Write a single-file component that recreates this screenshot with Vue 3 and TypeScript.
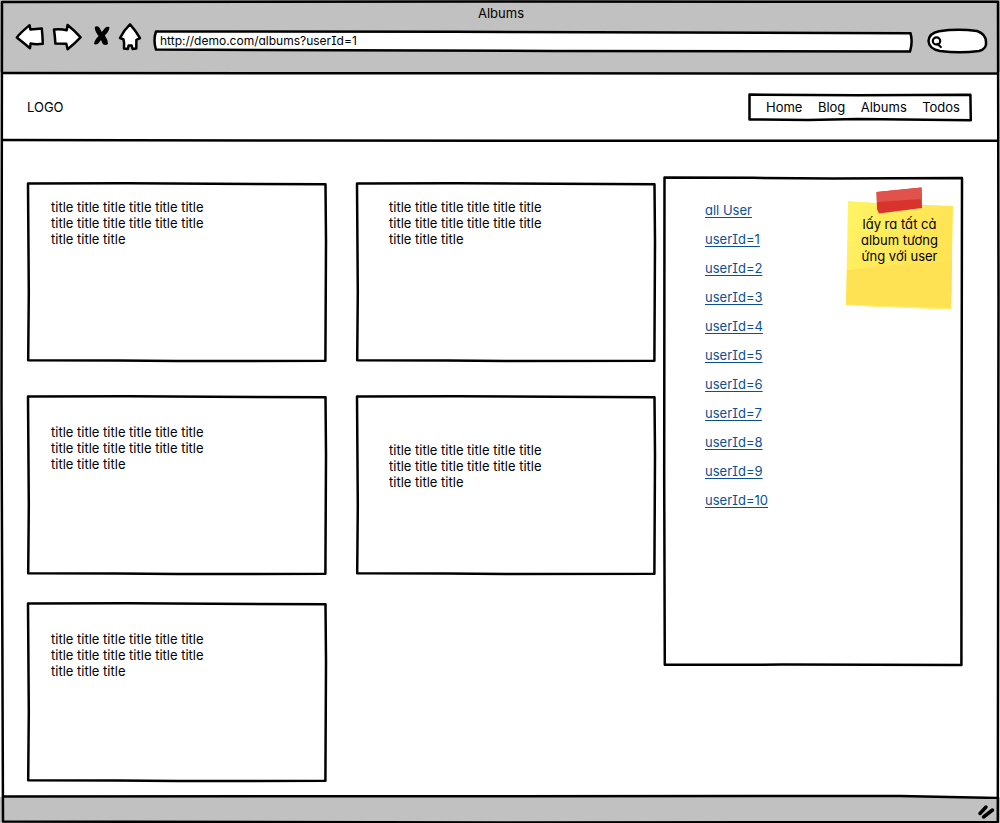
<script setup lang="ts">
import { ref } from 'vue'

interface Album {
  id: number
  title: string
  place: string
}

const words = (count: number): string => Array(count).fill('title').join(' ')

const address = ref('http://demo.com/albums?userId=1')
const query = ref('')
const menu: string[] = ['Home', 'Blog', 'Albums', 'Todos']
const albums: Album[] = [
  { id: 1, title: words(15), place: 'top' },
  { id: 2, title: words(15), place: 'top inset' },
  { id: 3, title: words(15), place: 'middle' },
  { id: 4, title: words(15), place: 'low inset' },
  { id: 5, title: words(15), place: 'middle' },
]
const users: string[] = ['all User', ...Array.from({ length: 10 }, (_, i) => `userId=${i + 1}`)]

const cardFrame =
  'M1 1.5 L100 1.3 L298.5 2.3 L299 60 L298.4 178.8 L150 179 L90 178.6 L1.2 178.3 L1.8 110 Z'
const panelFrame =
  'M1.5 1.5 L90 1.8 L170 2.6 L299 2 L298.6 240 L298.4 489 L120 488.6 L1.8 488.8 L1.2 300 Z'
</script>

<template>
  <div class="window">
    <header class="chrome">
      <div class="window-title">Albums</div>
      <div class="toolbar">
        <button type="button" class="tool" aria-label="Back">
          <svg width="30" height="30" viewBox="15 23 30 30">
            <path d="M16.8 37.6 C20 33 25 29 29.6 25.2 L30.4 29.6 L41.8 28.4 Q42.6 36 42.8 43.8 Q36 44.6 30.6 43.6 L30 48.2 Q23 42.5 16.8 37.6 Z" />
          </svg>
        </button>
        <button type="button" class="tool" aria-label="Forward">
          <svg width="30" height="30" viewBox="53 23 30 30">
            <path d="M54 29.5 Q61 28.8 66.7 30.2 L67.6 25 Q75 31 80.6 37.3 Q74 44 67.6 49.2 L66.3 43.8 L55.4 43.6 Q55 36 54 29.5 Z" />
          </svg>
        </button>
        <button type="button" class="tool" aria-label="Stop">
          <svg width="20" height="30" viewBox="91 23 20 30">
            <path class="solid" d="M94.8 27 Q97 25.5 99.3 27.5 L101.8 32 L105 28 Q107 26 109.4 27 Q109.6 31 104.8 35.6 Q107.8 39.5 108 44 Q105.5 46 102.8 44 L101 40 L98.3 43.5 Q96 45 94 44 Q94.4 40 98.6 36 Q94.5 31 94.8 27 Z" />
          </svg>
        </button>
        <button type="button" class="tool" aria-label="Home">
          <svg width="26" height="30" viewBox="119 23 26 30">
            <path d="M120 38 Q124 30 130 24.4 Q136 31 140 38.2 L136.4 39.8 L136.3 48.6 L132.6 49 L131.6 45.4 L128.6 45.4 L127.8 49 L124 48.6 Q124.6 43 123.4 39.2 Z" />
          </svg>
        </button>
        <label class="field address">
          <svg class="frame" viewBox="0 0 760 24" preserveAspectRatio="none" aria-hidden="true">
            <path d="M3 2.5 L300 2.8 L758.5 4.2 Q761 13 758 22.6 L400 22 L3 20.6 Q0 11 3 2.5 Z" />
          </svg>
          <input v-model="address" type="text" aria-label="Address" />
        </label>
        <label class="field search">
          <svg class="frame" viewBox="927 29 60 24" preserveAspectRatio="none" aria-hidden="true">
            <path d="M928.5 41 Q929 33 939 31.2 Q958 28.5 977 31 Q986 34 986 42 Q987 49 979 51 Q960 53.5 940 51 Q929 49 928.5 41 Z" />
            <ellipse class="lens" cx="936.5" cy="41" rx="3.7" ry="3.6" />
            <path class="lens" d="M937.5 44 L940.8 47" />
          </svg>
          <input v-model="query" type="search" aria-label="Search" />
        </label>
      </div>
    </header>
    <svg class="rule" viewBox="0 0 1000 4" preserveAspectRatio="none" aria-hidden="true">
      <path d="M2 1 L400 1.2 L998 1.6" />
    </svg>

    <div class="site-header">
      <div class="logo">LOGO</div>
      <nav class="menu">
        <svg class="frame" viewBox="0 0 224 28" preserveAspectRatio="none" aria-hidden="true">
          <path d="M1.5 1.6 L110 2.2 L222.4 1.8 L222.8 27.2 L110 26 L60 27 L1.5 26.4 Z" />
        </svg>
        <a v-for="item in menu" :key="item" href="#">{{ item }}</a>
      </nav>
    </div>
    <svg class="rule" viewBox="0 0 1000 4" preserveAspectRatio="none" aria-hidden="true">
      <path d="M2 1 L300 1.6 L998 1.8" />
    </svg>

    <main class="content">
      <section class="albums">
        <article v-for="album in albums" :key="album.id" class="card" :class="album.place">
          <svg class="frame" viewBox="0 0 300 180" preserveAspectRatio="none" aria-hidden="true">
            <path :d="cardFrame" />
          </svg>
          <p>{{ album.title }}</p>
        </article>
      </section>

      <aside class="panel">
        <svg class="frame" viewBox="0 0 300 490" preserveAspectRatio="none" aria-hidden="true">
          <path :d="panelFrame" />
        </svg>
        <ul class="users">
          <li v-for="user in users" :key="user"><a href="#">{{ user }}</a></li>
        </ul>
        <div class="note">
          <svg class="paper" viewBox="845 186 109 124" aria-hidden="true">
            <defs>
              <linearGradient id="paper-fill" x1="0" y1="0" x2="1" y2="0.5">
                <stop offset="0" stop-color="#fff566" />
                <stop offset="0.5" stop-color="#ffe95a" />
                <stop offset="1" stop-color="#ffe352" />
              </linearGradient>
            </defs>
            <path d="M848 201 L877 203 L953 206 L951 309 Q900 308 846 305 Z" fill="url(#paper-fill)" />
            <path d="M847 270 L905 264 L952 262 L951 309 L846 305 Z" fill="#ffe253" />
            <path d="M922 200 H949" stroke="#fffbd0" stroke-width="1" />
            <path d="M848 305 L900 307 L950 308.5" stroke="#fff27a" stroke-width="1" fill="none" />
            <path d="M876.500 192 L921.500 187.500 L922 208 L879 213.500 L877 209 Z" fill="#d9332e" />
            <path d="M876.500 192 L921.500 187.500 L922 199 L877 202 Z" fill="#e0524b" />
          </svg>
          <p>lấy ra tất cả album tương ứng với user</p>
        </div>
      </aside>
    </main>

    <svg class="rule" viewBox="0 0 1000 4" preserveAspectRatio="none" aria-hidden="true">
      <rect class="fill-under" x="0" y="2" width="1000" height="2" />
      <path d="M2 1.5 L900 1 L998 3" />
    </svg>
    <footer class="status">
      <svg width="20" height="18" viewBox="977 801 20 18" aria-hidden="true">
        <path class="grip" d="M980 811.5 L986 805 M983.5 815 L992.500 808" />
      </svg>
    </footer>
    <svg class="frame outer" viewBox="0 0 1000 823" preserveAspectRatio="none" aria-hidden="true">
      <path d="M2 2 L500 1.5 L998 1.8 L998.5 300 L997.8 821 L500 821.5 L3 820.5 L1.5 400 Z" />
    </svg>
  </div>
</template>

<style>
body {
  margin: 0;
  background: #fff;
}
</style>

<style scoped>
.window {
  position: relative;
  display: flex;
  flex-direction: column;
  box-sizing: border-box;
  min-height: 100vh;
  background: #fff;
  color: #000;
  font-family: Inter, "Liberation Sans", sans-serif;
  font-size: 13px;
  line-height: 16px;
  font-feature-settings: "cv11", "cv08";
}

svg {
  display: block;
  overflow: visible;
}

.frame {
  position: absolute;
  inset: 0;
  width: 100%;
  height: 100%;
  pointer-events: none;
}

.frame path,
.rule path {
  fill: none;
  stroke: #000;
  stroke-width: 2.5;
  stroke-linejoin: round;
  vector-effect: non-scaling-stroke;
}

.rule {
  width: 100%;
  height: 4px;
  flex: none;
}

.rule .fill-under {
  fill: #c1c1c1;
}

.chrome {
  padding: 3px 13px 19px 15px;
  background: #c1c1c1;
}

.window-title {
  line-height: 20px;
  text-align: center;
}

.toolbar {
  display: flex;
  align-items: flex-end;
  gap: 8px;
}

.tool {
  padding: 0;
  border: 0;
  background: none;
}

.tool path {
  fill: #fff;
  stroke: #000;
  stroke-width: 2.5;
  stroke-linejoin: round;
}

.tool path.solid {
  fill: #000;
  stroke-width: 0;
}

.field {
  position: relative;
  height: 24px;
}

.field .frame path {
  fill: #fff;
}

.field .frame .lens {
  fill: none;
  stroke: #000;
  stroke-width: 2.2;
  stroke-linecap: round;
}

.address {
  flex: 1;
}

.search {
  width: 60px;
  margin-left: 7px;
}

.field input {
  position: relative;
  box-sizing: border-box;
  width: 100%;
  height: 24px;
  padding: 0 7px 1px;
  border: 0;
  outline: 0;
  background: none;
  color: inherit;
  font: inherit;
  font-size: 12px;
  font-feature-settings: inherit;
  appearance: none;
}

.search input {
  padding-left: 18px;
}

.site-header {
  display: flex;
  align-items: center;
  justify-content: space-between;
  box-sizing: border-box;
  height: 63px;
  padding: 0 28px 2px 27px;
}

.menu {
  position: relative;
  display: flex;
  align-items: center;
  justify-content: space-between;
  box-sizing: border-box;
  width: 224px;
  height: 28px;
  padding: 0 12px 0 18px;
}

.menu a {
  position: relative;
  color: inherit;
  text-decoration: none;
}

.content {
  display: grid;
  flex: 1;
  grid-template-columns: minmax(0, 1fr) 300px;
  align-items: start;
  gap: 7px;
  padding: 33px 37px 13px 27px;
}

.albums {
  display: grid;
  grid-template-columns: 1fr 1fr;
  grid-template-rows: 186px;
  gap: 27px 29px;
  align-items: start;
  padding-top: 6px;
}

.card {
  position: relative;
  box-sizing: border-box;
  min-height: 180px;
  padding: 0 24px;
}

.card p {
  max-width: 160px;
  margin: 0;
}

.inset {
  padding-left: 33px;
}

.top {
  padding-top: 17px;
}

.middle {
  padding-top: 29px;
}

.low {
  padding-top: 47px;
}

.panel {
  position: relative;
  display: flex;
  align-items: flex-start;
  justify-content: space-between;
  box-sizing: border-box;
  min-height: 490px;
  padding: 10px 9px 10px 42px;
}

.users {
  display: grid;
  gap: 13px;
  margin: 0;
  padding: 16px 0 0;
  list-style: none;
}

.users a {
  color: #0b4f94;
  text-decoration: underline;
  text-underline-offset: 2px;
  text-decoration-skip-ink: none;
}

.note {
  position: relative;
  width: 109px;
  height: 124px;
}

.paper {
  position: absolute;
  inset: 0;
  width: 100%;
  height: 100%;
}

.note p {
  position: relative;
  margin: 0;
  padding: 30px 10px 0;
  text-align: center;
}

.status {
  display: flex;
  align-items: center;
  justify-content: flex-end;
  height: 25px;
  padding-right: 3px;
  background: #c1c1c1;
}

.grip {
  fill: none;
  stroke: #000;
  stroke-width: 3.5;
  stroke-linecap: round;
}
</style>
